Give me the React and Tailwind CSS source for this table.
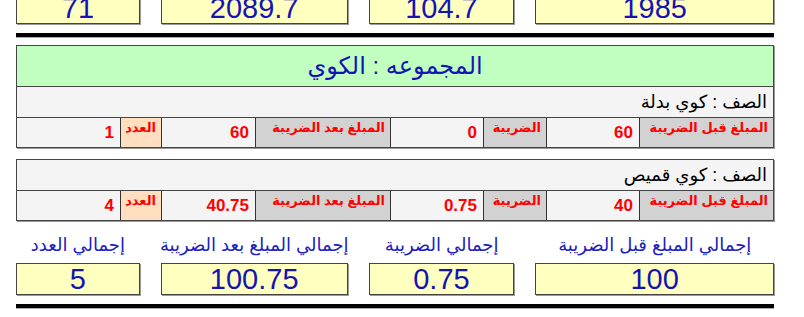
import React from 'react';

const topTotals = ['1985', '104.7', '2089.7', '71'];
const bottomTotals = ['100', '0.75', '100.75', '5'];
const boxWidths = ['w-[239px]', 'w-[146px]', 'w-[187px]', 'w-[124px]'];
const totalLabels = [
  'إجمالي المبلغ قبل الضريبة',
  'إجمالي الضريبة',
  'إجمالي المبلغ بعد الضريبة',
  'إجمالي العدد',
];

const items = [
  { name: 'الصف : كوي بدلة', before: '60', tax: '0', after: '60', count: '1' },
  { name: 'الصف : كوي قميص', before: '40', tax: '0.75', after: '40.75', count: '4' },
];

function TotalsRow({ values }) {
  return (
    <div className="flex gap-[21px]">
      {values.map((v, i) => (
        <div
          key={i}
          className={`${boxWidths[i]} h-[32px] flex items-center justify-center bg-[#ffffc0] border border-[#444] shadow-[1px_1px_0_#9a9a9a] text-[#1414b4] text-[29px] leading-none`}
        >
          <span dir="ltr">{v}</span>
        </div>
      ))}
    </div>
  );
}

function Label({ w, text, orange }) {
  return (
    <div
      className={`${w} flex justify-start items-start pr-[5px] pt-[1px] border-l border-[#333] ${
        orange ? 'bg-[#ffdfc0]' : 'bg-[#d2d2d2]'
      } text-[#f00] text-[13px] font-bold leading-[18px] whitespace-nowrap`}
    >
      {text}
    </div>
  );
}

function Value({ w, text, last }) {
  return (
    <div
      className={`${w} flex items-center justify-start pr-[6px] bg-[#f4f4f4] ${
        last ? '' : 'border-l border-[#333]'
      } text-[#f00] text-[17px] font-bold`}
    >
      <span dir="ltr">{text}</span>
    </div>
  );
}

function ItemRows({ item }) {
  return (
    <>
      <div className="h-[31px] flex items-center pr-[6px] bg-[#f4f4f4] text-black text-[18px] border-b border-[#444]">
        {item.name}
      </div>
      <div className="h-[29px] flex">
        <Label w="w-[134px]" text="المبلغ قبل الضريبة" />
        <Value w="w-[93px]" text={item.before} />
        <Label w="w-[63px]" text="الضريبة" />
        <Value w="w-[93px]" text={item.tax} />
        <Label w="w-[135px]" text="المبلغ بعد الضريبة" />
        <Value w="w-[94px]" text={item.after} />
        <Label w="w-[41px]" text="العدد" orange />
        <Value w="w-[103px]" text={item.count} last />
      </div>
    </>
  );
}

export default function App() {
  return (
    <div className="w-[804px] h-[317px] overflow-hidden bg-white font-['Liberation_Sans','DejaVu_Sans',Arial,sans-serif]">
      <div dir="rtl" className="w-[758px] ml-[16px] mt-[-8px]">
        <TotalsRow values={topTotals} />

        <div className="mt-[9px] h-[4px] bg-black shadow-[0_1px_0_#aaa]" />

        {/* group block */}
        <div className="mt-[8px] border border-[#444] shadow-[1px_1px_0_#9a9a9a]">
          <div className="h-[41px] flex items-center justify-center bg-[#c0ffc0] border-b border-[#444] text-[#1414b4] text-[24px]">
            المجموعه : الكوي
          </div>
          <ItemRows item={items[0]} />
        </div>

        <div className="mt-[11px] border border-[#444] shadow-[1px_1px_0_#9a9a9a]">
          <ItemRows item={items[1]} />
        </div>

        {/* totals labels */}
        <div className="flex gap-[21px] mt-[10px] h-[28px] items-center">
          {totalLabels.map((t, i) => (
            <div key={i} className={`${boxWidths[i]} flex justify-center text-[#2020c0] text-[18px]`}>
              <span className="whitespace-nowrap">{t}</span>
            </div>
          ))}
        </div>

        <div className="mt-[4px]">
          <TotalsRow values={bottomTotals} />
        </div>

        <div className="mt-[9px] h-[4px] bg-black shadow-[0_1px_0_#aaa]" />
      </div>
    </div>
  );
}
